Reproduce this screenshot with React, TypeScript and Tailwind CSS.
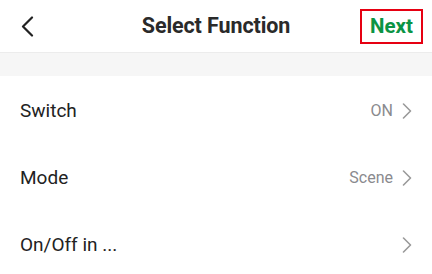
const rows = [
  { label: "Switch", value: "ON" },
  { label: "Mode", value: "Scene" },
  { label: "On/Off in ...", value: "" },
];

function BackIcon() {
  return (
    <svg width="14" height="21" viewBox="0 0 14 21" fill="none">
      <path d="M12 1.5 L3 10.5 L12 19.5" stroke="#222" strokeWidth="2.2" strokeLinecap="round" strokeLinejoin="round" />
    </svg>
  );
}

function Arrow() {
  return (
    <svg width="11" height="16" viewBox="0 0 11 16" fill="none">
      <path d="M1.5 1 L8.5 8 L1.5 15" stroke="#9a9a9a" strokeWidth="1.6" strokeLinecap="round" strokeLinejoin="round" />
    </svg>
  );
}

export default function App() {
  return (
    <div className="w-[432px] h-[274px] overflow-hidden bg-white font-['Roboto',sans-serif]">
      <header className="h-[53px] flex items-center border-b border-[#ececec]">
        <div className="w-[72px] pl-[20px] flex items-center">
          <BackIcon />
        </div>
        <h1 className="flex-1 text-center text-[21.5px] font-bold text-[#2a2a2a] tracking-[-0.1px]">
          Select Function
        </h1>
        <div className="w-[72px] flex justify-end pr-[9px]">
          <button className="h-[35px] w-[67px] border-2 border-[#e60012] text-[20.5px] font-bold text-[#0b9444] flex items-center justify-center">
            Next
          </button>
        </div>
      </header>

      <div className="h-[23px] bg-[#f6f6f6]" />

      <ul>
        {rows.map((row) => (
          <li key={row.label} className="h-[67px] pt-[3px] flex items-center justify-between pl-[20px] pr-[19px]">
            <span className="text-[19px] text-[#222]">{row.label}</span>
            <span className="flex items-center gap-[9px]">
              {row.value && <span className="text-[16px] text-[#8a8a8e]">{row.value}</span>}
              <Arrow />
            </span>
          </li>
        ))}
      </ul>
    </div>
  );
}
